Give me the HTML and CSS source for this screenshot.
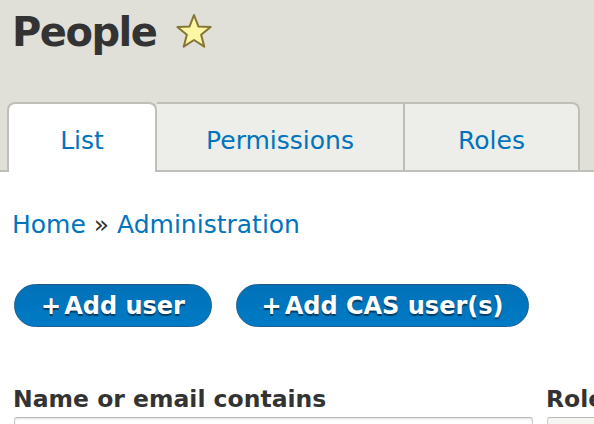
FILE: index.html
```html
<!DOCTYPE html>
<html lang="en">
<head>
<meta charset="utf-8">
<title>People</title>
<link rel="stylesheet" href="styles.css">
</head>
<body>
<div class="header">
  <h1 class="title">
    <span class="title-text">People</span>
    <svg class="star" width="38" height="36" viewBox="0 0 38 36" aria-hidden="true">
      <polygon points="19,2 23.41,13.43 35.64,14.09 26.13,21.82 29.29,33.66 19,27 8.71,33.66 11.87,21.82 2.36,14.09 14.59,13.43" fill="#fdf6a3" stroke="#857535" stroke-width="2" stroke-linejoin="round"/>
    </svg>
  </h1>
  <nav class="tabs">
    <a class="tab tab-list tab-active" href="#">List</a>
    <a class="tab tab-perm" href="#">Permissions</a>
    <a class="tab tab-roles" href="#">Roles</a>
  </nav>
</div>
<main class="content">
  <div class="breadcrumb"><a href="#">Home</a> <span class="sep">»</span> <a href="#">Administration</a></div>
  <div class="actions">
    <a class="button button-user" href="#"><span class="plus">+</span>Add user</a>
    <a class="button button-cas" href="#"><span class="plus">+</span>Add CAS user(s)</a>
  </div>
  <form class="filters">
    <div class="field field-name">
      <label class="label">Name or email contains</label>
      <input class="input" type="text">
    </div>
    <div class="field field-role">
      <label class="label">Role</label>
      <div class="select"></div>
    </div>
  </form>
</main>
</body>
</html>
```

FILE: styles.css
```css
html, body {
  margin: 0;
  padding: 0;
  overflow: hidden;
}
body {
  font-family: "DejaVu Sans", Verdana, sans-serif;
  color: #333;
  background: #fff;
}
a {
  color: #0074bd;
  text-decoration: none;
}
.header {
  background: #e0e0d8;
  border-bottom: 2px solid #bfbfba;
}
.title {
  margin: 0;
  padding: 9px 0 0 12px;
  display: flex;
  align-items: center;
  font-size: 40px;
  font-weight: bold;
  letter-spacing: -1.5px;
  line-height: 46px;
  color: #333;
}
.star {
  margin-left: 19px;
  margin-bottom: 2px;
  flex: none;
}
.tabs {
  display: flex;
  align-items: flex-start;
  margin: 47px 0 0 7px;
}
.tab {
  box-sizing: border-box;
  height: 68px;
  padding-top: 22px;
  font-size: 25px;
  line-height: 29px;
  text-align: center;
  background: #ededea;
  border-top: 2px solid #bfbfba;
  border-right: 2px solid #bfbfba;
}
.tab-list {
  width: 150px;
  border-left: 2px solid #bfbfba;
  border-radius: 8px 8px 0 0;
}
.tab-active {
  background: #fff;
  height: 70px;
  margin-bottom: -2px;
}
.tab-perm {
  width: 248px;
}
.tab-roles {
  width: 175px;
  border-radius: 0 8px 0 0;
}
.content {
  padding: 0 0 0 12px;
}
.breadcrumb {
  margin-top: 38px;
  font-size: 25px;
  line-height: 29px;
}
.sep {
  color: #333;
}
.actions {
  display: flex;
  gap: 24px;
  margin: 45px 0 0 2px;
}
.button {
  box-sizing: border-box;
  height: 43px;
  padding-top: 1px;
  line-height: 40px;
  font-size: 24px;
  font-weight: bold;
  color: #fff;
  text-align: center;
  border: 1px solid #1e5c90;
  border-radius: 22px;
  background: linear-gradient(to top, #007bc6, #0071b8);
  text-shadow: 0 2px 1px rgba(0, 0, 0, 0.5);
}
.button-user {
  width: 198px;
}
.button-cas {
  width: 293px;
}
.plus {
  margin-right: 3px;
}
.filters {
  display: flex;
  gap: 14px;
  margin: 58px 0 0 2px;
}
.field {
  flex: none;
}
.field-name {
  width: 519px;
}
.field-role {
  width: 200px;
}
.label {
  display: block;
  font-size: 23.5px;
  font-weight: bold;
  line-height: 28px;
  color: #333;
  margin-left: -1px;
}
.input {
  display: block;
  box-sizing: border-box;
  margin-top: 4px;
  width: 519px;
  height: 40px;
  border: 1px solid #ccc;
  border-top-color: #b8b8b8;
  border-radius: 3px;
  background: #fff;
  box-shadow: inset 0 1px 2px rgba(0, 0, 0, 0.125);
}
.select {
  box-sizing: border-box;
  margin-top: 4px;
  width: 200px;
  height: 40px;
  border: 1px solid #ccc;
  border-top-color: #b8b8b8;
  border-radius: 3px;
  background: linear-gradient(to bottom, #f6f6f3, #e7e7df);
}
```
